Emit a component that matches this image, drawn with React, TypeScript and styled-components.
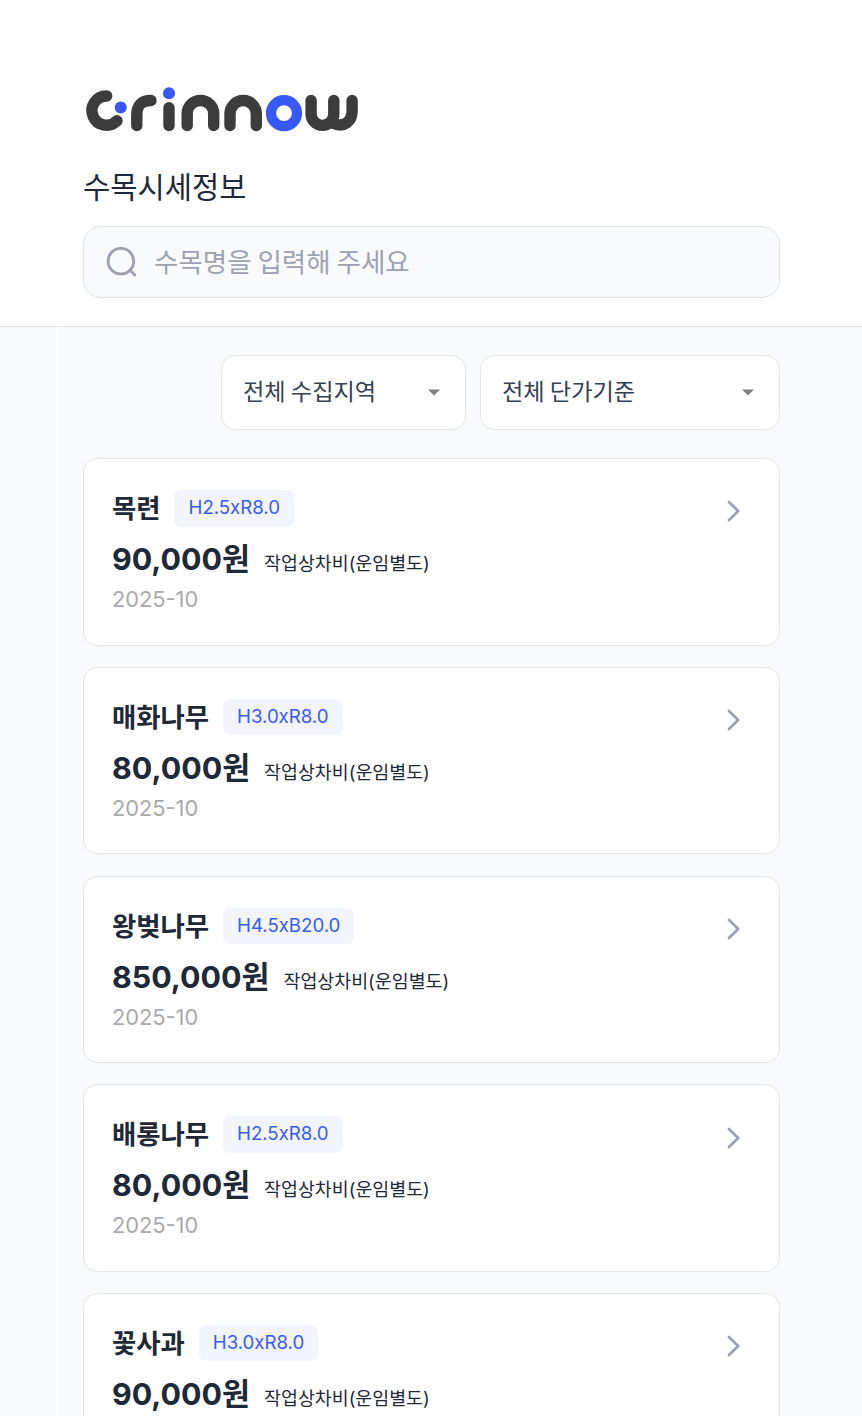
import React from "react";
import styled, { createGlobalStyle } from "styled-components";

const Global = createGlobalStyle`
  * { box-sizing: border-box; }
  body { margin: 0; background: #f9fafc; font-family: Inter, "Noto Sans CJK KR", sans-serif; color: #1f2937; }
`;
const Page = styled.div`height: 1416px; overflow: hidden;`;
const Header = styled.header`
  height: 327px; padding: 84px 82px 0 83px; background: #fff; border-bottom: 1px solid #e5e5e5;
  display: flex; flex-direction: column;
`;
const Logo = styled.svg`display: block; width: 280px; height: 56px; flex: none;`;
const Title = styled.h1`
  margin: 26px 0 0; height: 40px; line-height: 40px; font-size: 29.6px; font-weight: 400;
  font-family: "Noto Sans CJK KR", sans-serif;
`;
const Search = styled.label`
  margin-top: 20px; height: 72px; border: 1px solid #e1e3e6; border-radius: 18px; background: #f9fafc;
  display: flex; align-items: center; padding-left: 22px; gap: 16px;
`;
const SearchInput = styled.input`
  flex: 1; min-width: 0; border: 0; padding: 0 0 4px; background: transparent; outline: 0; height: 60px;
  font: 400 26.5px "Noto Sans CJK KR", sans-serif;
  &::placeholder { color: #9ca3af; opacity: 1; }
`;
const Main = styled.main`
  position: relative; margin: -1px 0 0 57px; border-left: 1px solid #fff; padding: 29px 82px 0 25px;
`;
const Filters = styled.div`display: flex; justify-content: flex-end; gap: 14px;`;
const Select = styled.button<{ $w: number }>`
  width: ${p => p.$w}px; height: 75px; padding: 0 24px 0 21px; background: #fff;
  border: 1px solid #e5e5e5; border-radius: 14.4px; color: #374151;
  font: 400 23.2px "Noto Sans CJK KR", sans-serif;
  display: flex; align-items: center; justify-content: space-between;
`;
const SelectText = styled.span`padding-bottom: 5px;`;
const List = styled.div`margin-top: 28.2px; display: flex; flex-direction: column; gap: 21.1px;`;
const Card = styled.article`
  height: 187.6px; flex: none; background: #fff; border: 1px solid #e5e5e5; border-radius: 14.4px;
  padding: 31px 32px 0 28px; display: flex; justify-content: space-between; align-items: flex-start;
`;
const NameRow = styled.div`display: flex; align-items: center; height: 36.4px; gap: 13.8px;`;
const Name = styled.h2`
  margin: 0; padding-bottom: 2px; font-size: 26.4px; line-height: 34px; font-weight: 700; font-family: "Noto Sans CJK KR", sans-serif;
`;
const Badge = styled.span`
  height: 36.4px; line-height: 35.4px; padding: 0 14.2px; border-radius: 7.2px; background: #f2f5fe; color: #3b5bfd;
  font-size: 18.7px; letter-spacing: -0.05px;
`;
const PriceRow = styled.div`display: flex; align-items: baseline; gap: 14px; height: 44px; margin-top: 10.6px; line-height: 44px;`;
const Price = styled.strong`font-size: 30.4px; font-weight: 700;`;
const Basis = styled.span`font-size: 18.4px;`;
const DateText = styled.div`font-size: 21.8px; line-height: 28px; margin-top: 4.2px; color: #aaa;`;
const Chevron = styled.svg`width: 28px; height: 28px; margin-top: 7.3px;`;

const trees = [
  ["목련", "H2.5xR8.0", "90,000"],
  ["매화나무", "H3.0xR8.0", "80,000"],
  ["왕벚나무", "H4.5xB20.0", "850,000"],
  ["배롱나무", "H2.5xR8.0", "80,000"],
  ["꽃사과", "H3.0xR8.0", "90,000"],
];

const Caret = () => (
  <svg width="14" height="8" viewBox="0 0 14 8"><path d="M1 0.4H13L7 6.4Z" fill="#808080" /></svg>
);

export default function App() {
  return (
    <Page>
      <Global />
      <Header>
        <Logo viewBox="83 84 280 56" fill="none" strokeLinecap="round" strokeLinejoin="round" stroke="#3c3c3c" strokeWidth="11.4">
          <path d="M106.7 96A14.6 14.6 0 1 0 117 120.8" />
          <path d="M136.8 125.5V115Q136.8 100.5 151 100.5" />
          <path d="M169 107.7V125.5" />
          <path d="M187.2 125.5V113.7A13.25 13.25 0 0 1 213.7 113.7V125.5" />
          <path d="M230 125.5V113.7A13.15 13.15 0 0 1 256.3 113.7V125.5" />
          <circle cx="284" cy="113.2" r="13" stroke="#3858f5" strokeWidth="10.2" />
          <path d="M311.1 100.5V114A11.35 11.35 0 0 0 333.8 114V100.5" />
          <path d="M333 123.2C344 128.5 352.1 121 352.1 111V100.5" />
          <circle cx="120.7" cy="107.5" r="6" fill="#3858f5" stroke="none" />
          <circle cx="169" cy="93.2" r="6" fill="#3858f5" stroke="none" />
        </Logo>
        <Title>수목시세정보</Title>
        <Search>
          <svg width="32" height="32" viewBox="0 0 32 32" fill="none" stroke="#9ca3af" strokeWidth="2.9" strokeLinecap="round">
            <circle cx="14.9" cy="15.2" r="12.8" /><path d="M24 24.2L28.8 29" />
          </svg>
          <SearchInput placeholder="수목명을 입력해 주세요" />
        </Search>
      </Header>
      <Main>
        <Filters>
          <Select $w={245}><SelectText>전체 수집지역</SelectText><Caret /></Select>
          <Select $w={300}><SelectText>전체 단가기준</SelectText><Caret /></Select>
        </Filters>
        <List>
          {trees.map(([name, size, price]) => (
            <Card key={name}>
              <div>
                <NameRow><Name>{name}</Name><Badge>{size}</Badge></NameRow>
                <PriceRow><Price>{price}원</Price><Basis>작업상차비(운임별도)</Basis></PriceRow>
                <DateText>2025-10</DateText>
              </div>
              <Chevron viewBox="0 0 28 28" fill="none" stroke="#9ca3af" strokeWidth="2.8" strokeLinecap="round" strokeLinejoin="round">
                <path d="M10 5L19.2 14L10 23" />
              </Chevron>
            </Card>
          ))}
        </List>
      </Main>
    </Page>
  );
}
